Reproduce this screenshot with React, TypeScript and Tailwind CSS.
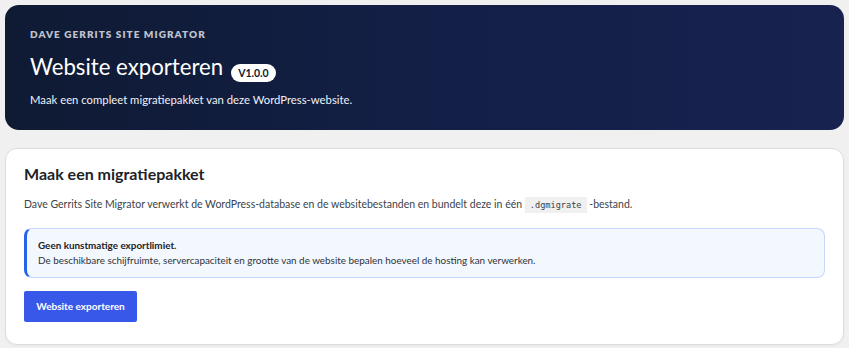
export default function App() {
  return (
    <div className="min-h-screen bg-[#f0f0f1] p-[5px] font-['Lato',sans-serif] text-[#1d2327]">
      {/* ---- Hero ---- */}
      <header className="rounded-[14px] bg-gradient-to-r from-[#0f1a33] via-[#131f46] to-[#17224f] px-[25px] pt-[22px] pb-[21px] text-white">
        <div className="text-[10px] font-extrabold uppercase leading-[14px] tracking-[0.105em] text-[#bfc2cc]">
          Dave Gerrits Site Migrator
        </div>
        <div className="mt-[10px] flex items-end gap-[8px]">
          <h1 className="text-[22.2px] font-normal leading-[32px]">Website exporteren</h1>
          <span className="mb-[1px] rounded-full bg-white px-[7px] text-[10.5px] font-bold leading-[18px] text-[#0f1a33]">
            V1.0.0
          </span>
        </div>
        <p className="mt-[8px] text-[11.3px] leading-[18px] text-[#f0f2f8]">
          Maak een compleet migratiepakket van deze WordPress-website.
        </p>
      </header>

      {/* ---- Card ---- */}
      <section className="mt-[18px] rounded-[12px] border border-[#dcdcde] bg-white px-[18px] pt-[14px] pb-[22px] shadow-[0_1px_2px_rgba(0,0,0,0.04)]">
        <h2 className="text-[16px] font-bold leading-[22px] text-[#1d2327]">Maak een migratiepakket</h2>
        <p className="mt-[10px] text-[10.5px] leading-[18px] text-[#3c434a]">
          Dave Gerrits Site Migrator verwerkt de WordPress-database en de websitebestanden en bundelt deze in één{' '}
          <code className="bg-[#f0f0f1] px-[5px] py-[3px] font-['DejaVu_Sans_Mono',monospace] text-[8.6px] text-[#3c434a]">
            .dgmigrate
          </code>{' '}
          -bestand.
        </p>

        <div className="mt-[14px] rounded-[8px] border border-[#c5d7fb] border-l-[3px] border-l-[#2563eb] bg-[#f3f7fe] px-[11px] pt-[9px] pb-[9px] text-[9.9px] leading-[15px] text-[#1d2327]">
          <div className="font-bold">Geen kunstmatige exportlimiet.</div>
          <div className="text-[#2c3338]">
            De beschikbare schijfruimte, servercapaciteit en grootte van de website bepalen hoeveel de hosting kan verwerken.
          </div>
        </div>

        <button className="mt-[13px] h-[31px] w-[113px] rounded-[2px] bg-[#3858e9] text-[10px] font-bold text-white">
          Website exporteren
        </button>
      </section>
    </div>
  )
}
